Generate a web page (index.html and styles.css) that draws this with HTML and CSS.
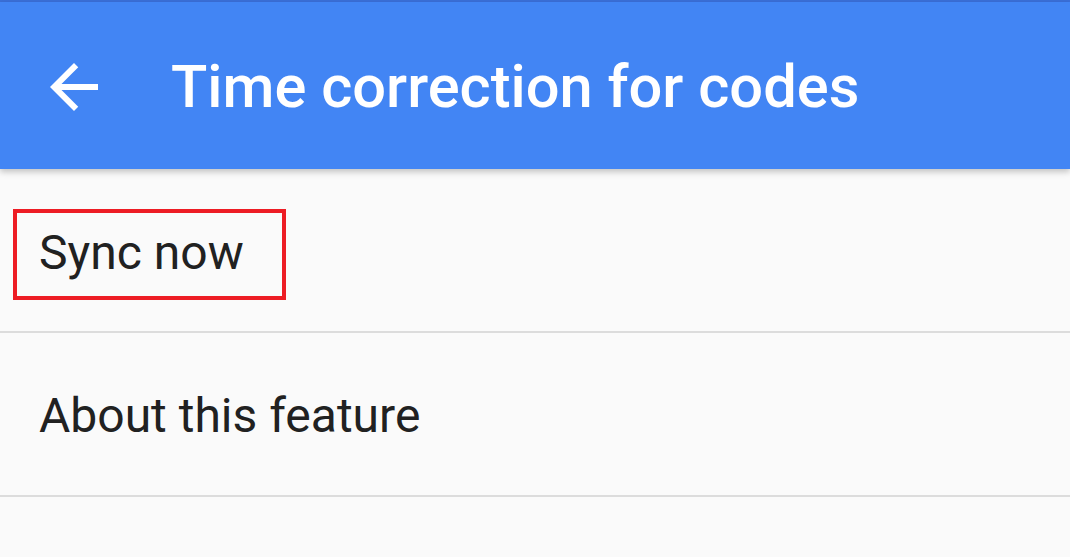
FILE: index.html
```html
<!DOCTYPE html>
<html>
<head>
<meta charset="utf-8">
<link rel="stylesheet" href="styles.css">
</head>
<body>
<div class="status"></div>
<header class="appbar">
  <div class="nav">
    <svg class="back" viewBox="0 0 24 24" width="72" height="72"><path fill="#fff" d="M20 11H7.83l5.59-5.59L12 4l-8 8 8 8 1.41-1.41L7.83 13H20v-2z"/></svg>
  </div>
  <h1 class="title">Time correction for codes</h1>
</header>
<main class="list">
  <div class="row"><span class="label highlighted">Sync now</span></div>
  <div class="row"><span class="label">About this feature</span></div>
</main>
</body>
</html>
```
FILE: styles.css
```css
html, body {
  margin: 0;
  padding: 0;
}
body {
  background: #fafafa;
  font-family: Roboto, "Noto Sans", sans-serif;
  width: 1070px;
  height: 557px;
  overflow: hidden;
}
.status {
  height: 2px;
  background: #3a6fd8;
}
.appbar {
  position: relative;
  z-index: 1;
  height: 167px;
  background: #4285f4;
  display: flex;
  align-items: center;
  box-shadow: 0 3px 6px rgba(0,0,0,0.22);
}
.nav {
  width: 72px;
  height: 72px;
  margin-left: 38px;
  margin-top: 2px;
  display: flex;
}
.back {
  display: block;
}
.title {
  margin: 4px 0 0 61px;
  color: #fff;
  font-weight: 500;
  font-size: 59.6px;
  line-height: 1;
}
.list {
  display: flex;
  flex-direction: column;
}
.row {
  height: 162px;
  border-bottom: 2px solid #dcdcdc;
  display: flex;
  align-items: center;
  padding-left: 39px;
}
.label {
  font-size: 48px;
  color: #212121;
  line-height: 1;
  padding-top: 4px;
}
.highlighted {
  outline: 4px solid #ed1c24;
  outline-offset: 0;
  padding: 16px 38px 19px 22px;
  margin: 8px 0 0 -22px;
}
```
